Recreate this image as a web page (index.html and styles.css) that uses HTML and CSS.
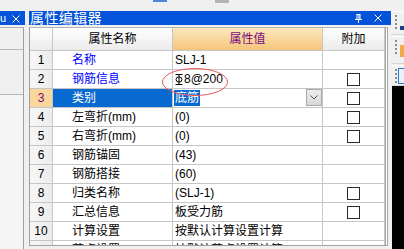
FILE: index.html
```html
<!DOCTYPE html>
<html lang="zh">
<head>
<meta charset="utf-8">
<link rel="stylesheet" href="styles.css">
</head>
<body>
<div class="top"><span class="mk mk-blue"></span><span class="mk mk-gray"></span></div>
<div class="main">
  <div class="leftp">
    <div class="ltitle"><span class="lt-text">u</span>
      <svg class="lx" width="8" height="8" viewBox="0 0 8 8"><path d="M0.5 0.5L7.5 7.5M7.5 0.5L0.5 7.5" stroke="#fff" stroke-width="1"/></svg>
    </div>
    <div class="lbody">
      <div class="lbox b1"></div>
      <div class="lbox b2"></div>
    </div>
  </div>
  <div class="rightp">
    <div class="rtitle">
      <span class="rt-text">属性编辑器</span>
      <svg class="pin" width="7" height="9" viewBox="0 0 7 9"><path d="M1.5 0.5H5.5M2 0.5V5M5 0.5V5M4 0.5V5M0 5.5H7M3.5 5.5V9" stroke="#fff" stroke-width="1" fill="none"/></svg>
      <svg class="rx" width="8" height="8" viewBox="0 0 8 8"><path d="M0.5 0.5L7.5 7.5M7.5 0.5L0.5 7.5" stroke="#fff" stroke-width="1"/></svg>
    </div>
    <div class="tablewrap">
      <div class="grid">
        <div class="c h"></div>
        <div class="c h">属性名称</div>
        <div class="c h val">属性值</div>
        <div class="c h">附加</div>

        <div class="c n">1</div>
        <div class="c nm blue">名称</div>
        <div class="c v">SLJ-1</div>
        <div class="c k"></div>

        <div class="c n">2</div>
        <div class="c nm blue">钢筋信息</div>
        <div class="c v"><svg class="steel" width="8" height="11" viewBox="0 0 8 11"><path d="M0.5 0.5H7.5M0.5 10.5H7.5M4 0.5V10.5" stroke="#000" stroke-width="1" fill="none"/><ellipse cx="4" cy="5.5" rx="3" ry="2.6" stroke="#000" stroke-width="1" fill="none"/></svg>8@200</div>
        <div class="c k"><span class="cb"></span></div>

        <div class="c n cur">3</div>
        <div class="c nm sel">类别</div>
        <div class="c v edit"><span class="hl">底筋</span><span class="dd"><svg width="8" height="5" viewBox="0 0 8 5"><path d="M0.5 0.5L4 4L7.5 0.5" stroke="#555" stroke-width="1" fill="none"/></svg></span></div>
        <div class="c k"><span class="cb"></span></div>

        <div class="c n">4</div>
        <div class="c nm">左弯折(mm)</div>
        <div class="c v">(0)</div>
        <div class="c k"><span class="cb"></span></div>

        <div class="c n">5</div>
        <div class="c nm">右弯折(mm)</div>
        <div class="c v">(0)</div>
        <div class="c k"><span class="cb"></span></div>

        <div class="c n">6</div>
        <div class="c nm">钢筋锚固</div>
        <div class="c v">(43)</div>
        <div class="c k"></div>

        <div class="c n">7</div>
        <div class="c nm">钢筋搭接</div>
        <div class="c v">(60)</div>
        <div class="c k"></div>

        <div class="c n">8</div>
        <div class="c nm">归类名称</div>
        <div class="c v">(SLJ-1)</div>
        <div class="c k"><span class="cb"></span></div>

        <div class="c n">9</div>
        <div class="c nm">汇总信息</div>
        <div class="c v">板受力筋</div>
        <div class="c k"><span class="cb"></span></div>

        <div class="c n">10</div>
        <div class="c nm">计算设置</div>
        <div class="c v">按默认计算设置计算</div>
        <div class="c k"></div>

        <div class="c n">11</div>
        <div class="c nm">节点设置</div>
        <div class="c v">按默认节点设置计算</div>
        <div class="c k"></div>
      </div>
      <div class="dbl"></div>
    </div>
  </div>
  <div class="tools">
    <div class="tg g1"><span class="grip"></span><span class="ic ic1"></span></div>
    <div class="tg g2"><span class="grip"></span><span class="ic ic2"></span></div>
    <div class="tg g3"><span class="grip"></span><span class="ic ic3"></span></div>
    <div class="black"></div>
  </div>
</div>
<svg class="ring" width="68" height="30" viewBox="0 0 68 30"><ellipse cx="34" cy="15" rx="32.5" ry="13.5" stroke="#e8585a" stroke-width="1" fill="none"/></svg>
</body>
</html>
```
FILE: styles.css
```css
* { box-sizing: border-box; margin: 0; padding: 0; }
html, body { width: 404px; height: 249px; overflow: hidden; }
body {
  background: #f0f0f0;
  font-family: "Liberation Sans", "Noto Sans CJK SC", sans-serif;
  font-size: 12px;
  color: #000;
}
.top { height: 11px; display: flex; align-items: flex-start; }
.mk-blue { margin-left: 153px; width: 14px; height: 2px; background: #4a86d8; }
.mk-gray { margin-left: 48px; width: 14px; height: 3px; background: #b4b4b4; }

.main { display: flex; height: 238px; }

.leftp { width: 25px; display: flex; flex-direction: column; }
.ltitle {
  height: 14px; background: #0553d8; color: #fff;
  display: flex; align-items: center; overflow: hidden;
}
.lt-text { font-size: 11px; line-height: 14px; width: 12px; }
.lx { margin-top: 1px; }
.lbody {
  flex: 1; margin-top: 2px; width: 24px;
  border-right: 1px solid #a0a0a0; border-top: 1px solid #b4b4b4;
  background: #f5f5f5;
}
.lbox { background: #f0f0f0; border-bottom: 1px solid #b8b8b8; }
.b1 { height: 22px; }
.b2 { height: 45px; }

.rightp { width: 362px; margin-left: 4px; display: flex; flex-direction: column; }
.rtitle {
  height: 14px; background: #0553d8; color: #fff;
  display: flex; align-items: center; padding-left: 1px;
}
.rt-text { flex: 1; font-size: 14px; line-height: 14px; letter-spacing: 0.4px; }
.pin { margin-right: 12px; }
.rx { margin-right: 9px; }

.tablewrap {
  margin-top: 2px; height: 219px; width: 359px;
  display: flex; overflow: hidden;
  border-left: 1px solid #a0a0a0; border-top: 1px solid #b4b4b4; border-bottom: 1px solid #a0a0a0;
  background: #fff;
}
.grid {
  display: grid;
  grid-template-columns: 23px 120px 150px 62px;
  grid-template-rows: 23px;
  grid-auto-rows: 19px;
  align-content: start;
  width: 355px;
}
.c {
  border-right: 1px solid #c6c6c6; border-bottom: 1px solid #c6c6c6;
  display: flex; align-items: center; white-space: nowrap; overflow: hidden;
  line-height: 18px;
}
.h { background: linear-gradient(#ffffff, #ebebeb); justify-content: center; }
.h.val { background: linear-gradient(#fde8bd, #f4c57b); color: #7a0a7a; }
.n { justify-content: center; background: linear-gradient(90deg, #f7f7f7, #ececec); }
.n.cur { background: #f9d79c; color: #7a0a7a; }
.nm { padding-left: 19px; }
.blue { color: #0000ff; }
.sel { background: #0869d0; color: #fff; }
.v { padding-left: 2px; }
.edit { justify-content: space-between; padding-left: 1px; }
.hl { background: #0869d0; color: #fff; height: 16px; line-height: 16px; padding: 0 1px; }
.dd {
  width: 16px; height: 17px; margin-top: -1px;
  background: linear-gradient(#ececec, #d8d8d8); border: 1px solid #a8a8a8;
  display: flex; align-items: center; justify-content: center;
}
.steel { margin-right: 1px; }
.k { justify-content: center; }
.cb { width: 13px; height: 13px; border: 1px solid #2a2a2a; background: #fff; }
.dbl { width: 3px; border-left: 1px solid #a8a8a8; border-right: 1px solid #a8a8a8; background: #fff; }

.tools { width: 13px; display: flex; flex-direction: column; }
.tg { display: flex; align-items: flex-start; border-top: 1px solid #fff; border-bottom: 1px solid #d8d8d8; }
.g1 { height: 24px; }
.g2 { height: 28px; margin-top: 1px; }
.g3 { height: 21px; margin-top: 1px; }
.grip {
  width: 2px; height: 16px; margin: 3px 0 0 4px;
  background: repeating-linear-gradient(#8a8a8a 0 2px, transparent 2px 4px);
}
.ic { margin-left: 3px; }
.ic1 { width: 4px; height: 4px; margin-top: 14px; background: #1e3c8c; }
.ic2 { width: 4px; height: 12px; margin-top: 8px; background: #f0a848; }
.ic3 { width: 7px; height: 16px; margin-top: 2px; border: 1px solid #2a78d0; border-right: none; background: #e8f0fa; margin-left: 1px; }
.black { flex: 1; margin-left: 1px; background: #000; }

.ring { position: absolute; left: 161px; top: 67px; }
```
